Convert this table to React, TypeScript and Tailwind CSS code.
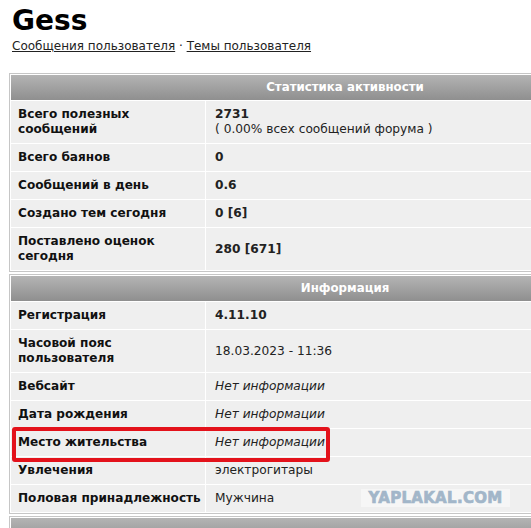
const stats: { label: string[]; value: React.ReactNode; tall?: boolean }[] = [
  {
    label: ["Всего полезных", "сообщений"],
    value: (
      <div className="leading-[15px]">
        <div className="font-bold">2731</div>
        <div>( 0.00% всех сообщений форума )</div>
      </div>
    ),
    tall: true,
  },
  { label: ["Всего баянов"], value: <b>0</b> },
  { label: ["Сообщений в день"], value: <b>0.6</b> },
  { label: ["Создано тем сегодня"], value: <b>0 [6]</b> },
  { label: ["Поставлено оценок", "сегодня"], value: <b>280 [671]</b>, tall: true },
];

const info: { label: string[]; value: React.ReactNode; tall?: boolean }[] = [
  { label: ["Регистрация"], value: <b>4.11.10</b> },
  { label: ["Часовой пояс", "пользователя"], value: <span>18.03.2023 - 11:36</span>, tall: true },
  { label: ["Вебсайт"], value: <i>Нет информации</i> },
  { label: ["Дата рождения"], value: <i>Нет информации</i> },
  { label: ["Место жительства"], value: <i>Нет информации</i> },
  { label: ["Увлечения"], value: <span>электрогитары</span> },
  { label: ["Половая принадлежность"], value: <span>Мужчина</span> },
];

function Section({
  title,
  rows,
  className = "",
}: {
  title: string;
  rows: typeof stats;
  className?: string;
}) {
  return (
    <div className={"w-[540px] border border-[#c6c6c6] bg-white p-px " + className}>
      <div className="flex h-[25px] items-center justify-center bg-gradient-to-b from-[#b4b4b4] to-[#8f8f8f] pl-[132px] text-[11.8px] font-bold text-white">
        {title}
      </div>
      <div className="mt-px grid grid-cols-[194px_1fr] gap-px bg-white">
        {rows.map((r, i) => (
          <div key={i} className="contents">
            <div
              className={
                "flex flex-col justify-center whitespace-nowrap bg-[#efefef] pl-[7px] text-[12.1px] font-bold leading-[15px] text-[#111] " +
                (r.tall ? "h-[42px]" : "h-[27px]")
              }
            >
              {r.label.map((l) => (
                <div key={l}>{l}</div>
              ))}
            </div>
            <div className="flex items-center bg-[#efefef] pl-[9px] text-[12.2px] text-[#222]">
              {r.value}
            </div>
          </div>
        ))}
      </div>
    </div>
  );
}

export default function App() {
  return (
    <div
      className="relative h-[528px] w-[531px] overflow-hidden bg-white"
      style={{ fontFamily: '"DejaVu Sans", Verdana, sans-serif' }}
    >
      {/* header */}
      <div className="pl-[12px] pt-[3px]">
        <h1 className="text-[28px] font-bold leading-[35px] text-black">Gess</h1>
        <div className="mt-0 text-[12px] leading-[16px] text-[#222]">
          <span className="underline">Сообщения пользователя</span>
          <span> · </span>
          <span className="underline">Темы пользователя</span>
        </div>
      </div>

      <div className="mt-[19px] pl-[9px]">
        <Section title="Статистика активности" rows={stats} />
        <Section title="Информация" rows={info} className="mt-[2px]" />
        <div className="mt-[2px] w-[540px] border border-[#c6c6c6] bg-white p-px">
          <div className="h-[25px] bg-gradient-to-b from-[#b4b4b4] to-[#8f8f8f]" />
        </div>
      </div>

      {/* red highlight */}
      <div className="absolute left-[12px] top-[427px] h-[35px] w-[318px] rounded-[3px] border-4 border-[#e3121b]" />

      {/* watermark */}
      <div className="absolute left-[361px] top-[489px] flex h-[18px] w-[149px] items-center justify-center bg-[#f6f6f6] text-[15px] font-black tracking-[0.3px] text-[#a2b6c9] [-webkit-text-stroke:0.7px_#a2b6c9]">
        YAPLAKAL.COM
      </div>
    </div>
  );
}
